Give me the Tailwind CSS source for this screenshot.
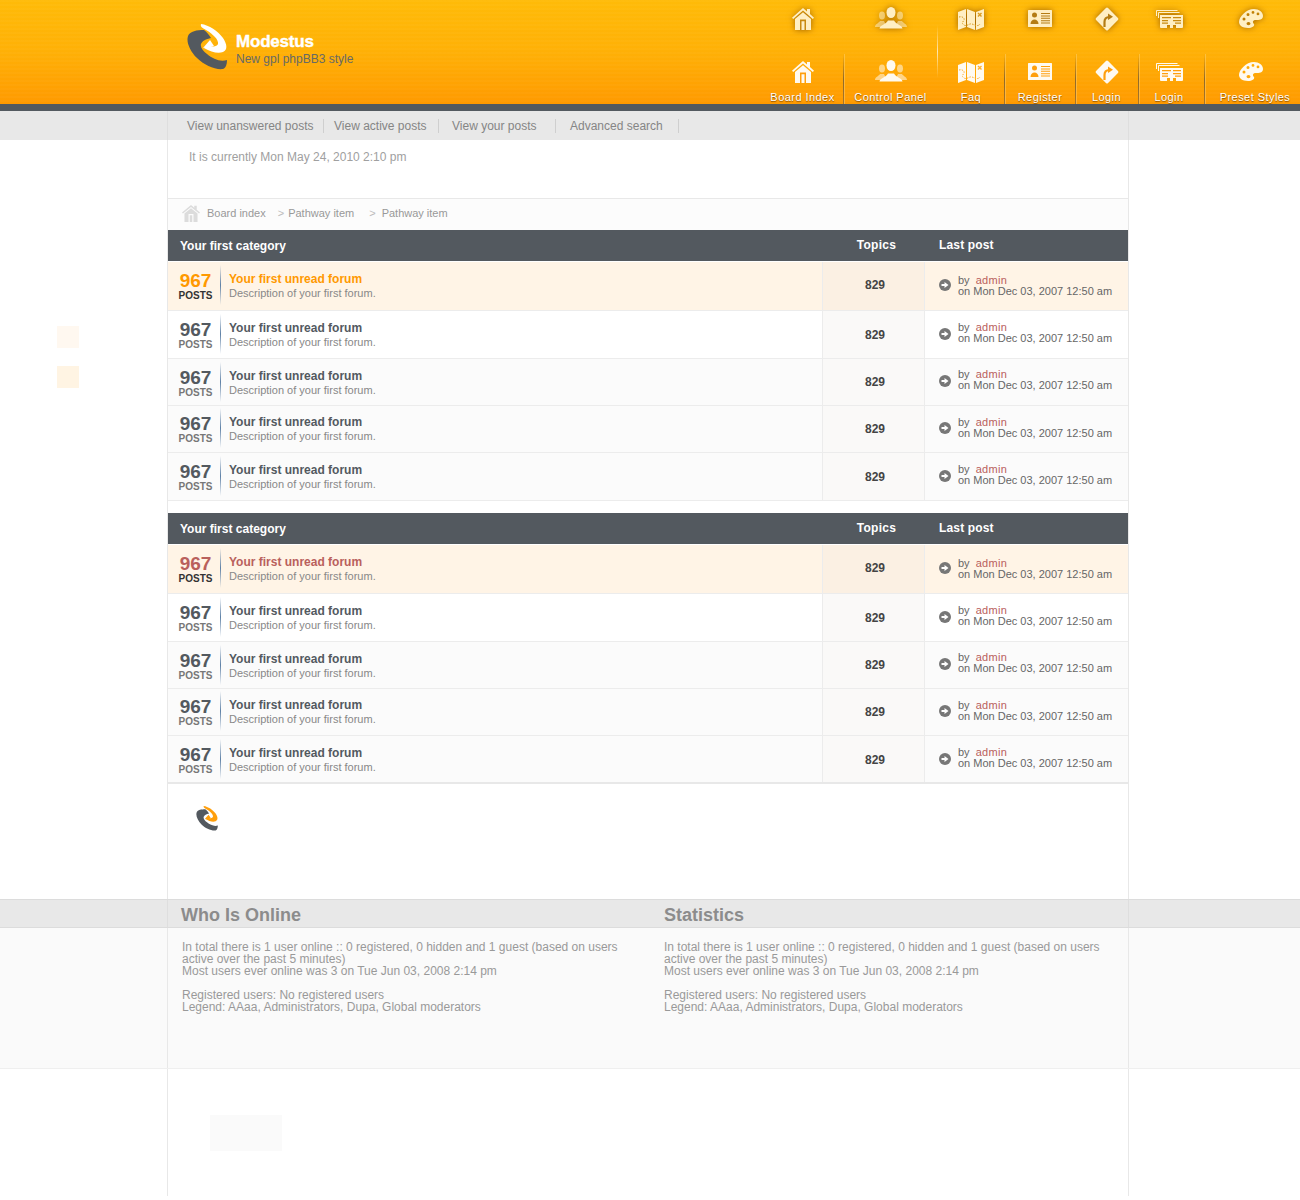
<!DOCTYPE html>
<html>
<head>
<meta charset="utf-8" />
<title>Modestus</title>
<script src="https://cdn.jsdelivr.net/npm/@tailwindcss/browser@4"></script>
</head>
<body class="bg-white font-['Liberation_Sans',Arial,sans-serif] relative">

<!-- icon sheet -->
<svg class="hidden">
  <symbol id="i-house" viewBox="0 0 22 22">
    <path fill="currentColor" d="M11 0l4 3.4V1h3v5l4 3.8-1.2 1.3L11 2.6 1.200 11.100 0 9.800z"/>
    <path fill="currentColor" d="M3 11l8-6.800 8 6.800v11H3z"/>
    <path class="fill-[var(--d)]" d="M8 11.500h6V22h-1.500v-8.800h-3V22H8z"/>
  </symbol>
  <symbol id="i-people" viewBox="0 0 32 22">
    <g fill="currentColor" opacity=".55">
      <ellipse cx="7" cy="8.500" rx="3" ry="4"/><path d="M0 20c0-3 4-4 5-6h4l3 6z"/>
      <ellipse cx="25" cy="8.500" rx="3" ry="4"/><path d="M32 20c0-3-4-4-5-6h-4l-3 6z"/>
    </g>
    <ellipse cx="16" cy="5.500" rx="4.500" ry="5.500" fill="currentColor"/>
    <path fill="currentColor" d="M4.500 21.500c.5-3.500 6.500-4 8.500-8h6c2 4 8 4.500 8.500 8z"/>
  </symbol>
  <symbol id="i-map" viewBox="0 0 26 21">
    <path fill="currentColor" d="M0 3l8-3v18l-8 3zM9 0l8 3v18l-8-3zM18 3l8-3v18l-8 3z"/>
    <path fill="none" class="stroke-[var(--d)]" stroke-width="1" stroke-dasharray="1.500 1.200" d="M1 8c3-1 6 1 5 3s-3 3 0 5 5-2 8-1 6 3 8 0"/>
    <path fill="none" class="stroke-[var(--d)]" stroke-width="1.400" d="M20 4l3.500 3.500M23.500 4L20 7.500"/>
  </symbol>
  <symbol id="i-card" viewBox="0 0 24 17">
    <rect width="24" height="17" rx=".5" fill="currentColor"/>
    <circle cx="6.500" cy="5" r="2.500" class="fill-[var(--d)]"/>
    <path class="fill-[var(--d)]" d="M2.500 14c0-3 2-4.500 4-4.500s4 1.500 4 4.500z"/>
    <path class="fill-[var(--d)]" d="M13 3h9v1h-9zM13 5.400h9v1h-9zM13 7.800h9v1h-9zM13 10.200h9v1h-9zM13 12.600h9v1h-9z"/>
  </symbol>
  <symbol id="i-sign" viewBox="0 0 26 26">
    <rect x="4.500" y="4.500" width="17" height="17" rx="1.500" transform="rotate(45 13 13)" fill="currentColor"/>
    <path fill="none" class="stroke-[var(--d)]" stroke-width="2.200" d="M10.500 21v-5c0-3 2-5 5-5"/>
    <path class="fill-[var(--d)]" d="M14 7.500l5 3.200-5 3.300z"/>
  </symbol>
  <symbol id="i-news" viewBox="0 0 27 18">
    <path fill="none" stroke="currentColor" d="M.5 6V.5h21M2.500 8V2.500h21"/>
    <path fill="currentColor" d="M4 5h23v12a1 1 0 0 1-1 1h-6v-3h-3v3h-3v-3h-3v3H5a1 1 0 0 1-1-1z"/>
    <path class="fill-[var(--d)]" d="M6 7h9v1.200H6zM17 7h8v1.200h-8zM6 10h6v1.200H6zM17 10h8v1.200h-8zM6 12.500h6v1.200H6zM19 12.500h6v1.200h-6z"/>
  </symbol>
  <symbol id="i-palette" viewBox="0 0 24 19">
    <path fill="currentColor" fill-rule="evenodd" d="M15 0C20 0 24 3 24 7C24 11 20 11 17 11C14 11 13 13 15 15C16 17 13 19 9 19C3 19 0 16 0 13C0 8 7 0 15 0ZM9 4a1.500 1.500 0 1 0 0 3 1.500 1.500 0 0 0 0-3ZM14 2a1.400 1.400 0 1 0 0 2.800A1.400 1.400 0 0 0 14 2ZM19 3.500a1.400 1.400 0 1 0 0 2.800 1.400 1.400 0 0 0 0-2.800ZM5 8.500a1.500 1.500 0 1 0 0 3 1.500 1.500 0 0 0 0-3ZM9.500 13a2 1.600 0 1 0 0 3.200 2 1.600 0 0 0 0-3.200Z"/>
  </symbol>
  <symbol id="i-swirl" viewBox="0 0 42 46">
    <path class="fill-[var(--a)]" d="M17 6C10 6 3 7 1 12C-1 18 3 27 10 34C17 41 28 46 36 45C39 44 40 40 40 36C33 38 26 35 20 30C16 27 13 23 14 20C15 17 19 15 24 14C22 11 20 8 17 6Z"/>
    <path class="fill-[var(--b)]" d="M14 0C22 1 31 7 36 14C40 20 41 26 36 28C31 30 24 28 17 24L20 21C25 23 30 23 31 20C32 16 26 10 19 6C16 4 13 3 14 0Z"/>
    <path class="fill-[var(--b)]" d="M16 24L23 16L27 22Z"/>
  </symbol>
</svg>

<div class="absolute left-[57px] top-[326px] w-[22px] h-[22px] bg-[#fff8f0]"></div>
<div class="absolute left-[57px] top-[366px] w-[22px] h-[22px] bg-[#fff4e3]"></div>

<header class="h-[104px] flex bg-[repeating-linear-gradient(180deg,rgba(255,255,255,0.025)_0_2px,transparent_2px_4px),linear-gradient(180deg,#ffbb08,#ffb006_50%,#ff9a00)]">
  <div class="ml-[187px] mt-[24px] flex items-start gap-[7px]">
    <svg class="w-[42px] h-[46px] [--a:#53595f] [--b:#ffffff]"><use href="#i-swirl"/></svg>
    <div class="mt-[8px]">
      <div class="text-[17px] leading-[20px] font-bold text-white tracking-[-0.2px] [-webkit-text-stroke:0.4px_white]">Modestus</div>
      <div class="text-[12px] leading-[14px] text-[#676a66]">New gpl phpBB3 style</div>
    </div>
  </div>
  <nav class="absolute left-[762px] top-0 h-[104px] w-[538px] flex text-white text-[11px] tracking-[0.45px] [text-shadow:0_1px_1px_rgba(110,60,0,0.8)]">
    <a class="w-[81px] flex flex-col items-center [--d:#ff9f0c]">
      <svg class="w-[22px] h-[22px] mt-[8px] text-[#ffefc4] [--d:#c88a10] drop-shadow-[0_0_3px_rgba(140,80,0,0.8)]"><use href="#i-house"/></svg>
      <svg class="w-[22px] h-[22px] mt-[31px] text-[#fffaf0]"><use href="#i-house"/></svg>
      <span class="mt-[8px] leading-[13px]">Board Index</span>
    </a>
    <i class="self-end h-[50px] w-[1px] bg-linear-to-b from-transparent via-[#8f6a2a] to-[#a8752a] shadow-[1px_0_0_rgba(255,225,160,0.35)]"></i>
    <a class="w-[93px] flex flex-col items-center [--d:#ff9f0c]">
      <svg class="w-[32px] h-[22px] mt-[7px] text-[#ffefc4] drop-shadow-[0_0_3px_rgba(140,80,0,0.8)]"><use href="#i-people"/></svg>
      <svg class="w-[32px] h-[22px] mt-[31px] text-[#fffaf0]"><use href="#i-people"/></svg>
      <span class="mt-[9px] leading-[13px]">Control Panel</span>
    </a>
    <i class="self-start mt-[25px] h-[53px] w-[1px] bg-linear-to-b from-transparent via-[#ffe6b0] to-transparent"></i>
    <a class="w-[66px] flex flex-col items-center [--d:#ffb030]">
      <svg class="w-[26px] h-[21px] mt-[9px] text-[#ffefc4] [--d:#d89a20] drop-shadow-[0_0_3px_rgba(140,80,0,0.8)]"><use href="#i-map"/></svg>
      <svg class="w-[26px] h-[21px] mt-[32px] text-[#fffaf0]"><use href="#i-map"/></svg>
      <span class="mt-[8px] leading-[13px]">Faq</span>
    </a>
    <i class="self-end h-[50px] w-[1px] bg-linear-to-b from-transparent via-[#8f6a2a] to-[#a8752a] shadow-[1px_0_0_rgba(255,225,160,0.35)]"></i>
    <a class="w-[70px] flex flex-col items-center [--d:#ff9f0c]">
      <svg class="w-[24px] h-[17px] mt-[10px] text-[#ffefc4] [--d:#b47c14] drop-shadow-[0_0_3px_rgba(140,80,0,0.8)]"><use href="#i-card"/></svg>
      <svg class="w-[24px] h-[17px] mt-[36px] text-[#fffaf0]"><use href="#i-card"/></svg>
      <span class="mt-[11px] leading-[13px]">Register</span>
    </a>
    <i class="self-end h-[50px] w-[1px] bg-linear-to-b from-transparent via-[#8f6a2a] to-[#a8752a] shadow-[1px_0_0_rgba(255,225,160,0.35)]"></i>
    <a class="w-[62px] pr-[1px] flex flex-col items-center [--d:#ff9f0c]">
      <svg class="w-[26px] h-[26px] mt-[6px] text-[#ffefc4] [--d:#b47c14] drop-shadow-[0_0_3px_rgba(140,80,0,0.8)]"><use href="#i-sign"/></svg>
      <svg class="w-[26px] h-[26px] mt-[27px] text-[#fffaf0]"><use href="#i-sign"/></svg>
      <span class="mt-[6px] leading-[13px]">Login</span>
    </a>
    <i class="self-end h-[50px] w-[1px] bg-linear-to-b from-transparent via-[#8f6a2a] to-[#a8752a] shadow-[1px_0_0_rgba(255,225,160,0.35)]"></i>
    <a class="w-[65px] pr-[5px] flex flex-col items-center [--d:#ff9f0c]">
      <svg class="w-[27px] h-[18px] mt-[10px] text-[#ffefc4] [--d:#c88a10] drop-shadow-[0_0_3px_rgba(140,80,0,0.8)]"><use href="#i-news"/></svg>
      <svg class="w-[27px] h-[18px] mt-[35px] text-[#fffaf0]"><use href="#i-news"/></svg>
      <span class="mt-[10px] leading-[13px]">Login</span>
    </a>
    <i class="self-end h-[50px] w-[1px] bg-linear-to-b from-transparent via-[#8f6a2a] to-[#a8752a] shadow-[1px_0_0_rgba(255,225,160,0.35)]"></i>
    <a class="w-[95px] flex flex-col items-center [--d:#ff9f0c]">
      <svg class="w-[24px] h-[19px] mt-[9px] mr-[4px] text-[#ffefc4] drop-shadow-[0_0_3px_rgba(140,80,0,0.8)]"><use href="#i-palette"/></svg>
      <svg class="w-[24px] h-[19px] mt-[34px] mr-[4px] text-[#fffaf0]"><use href="#i-palette"/></svg>
      <span class="mt-[10px] ml-[5px] leading-[13px]">Preset Styles</span>
    </a>
  </nav>
</header>
<div class="h-[7px] bg-[#535a60]"></div>

<div class="bg-[#e8e8e8]">
  <div class="ml-[167px] w-[962px] h-[29px] border-x border-[#dedede] flex items-center text-[12px] text-[#858585]">
    <a class="ml-[19px] w-[137px] border-r border-[#cfcfcf] leading-[14px]">View unanswered posts</a>
    <a class="pl-[10px] w-[115px] border-r border-[#cfcfcf] leading-[14px]">View active posts</a>
    <a class="pl-[13px] w-[117px] border-r border-[#cfcfcf] leading-[14px]">View your posts</a>
    <a class="pl-[14px] w-[123px] border-r border-[#cfcfcf] leading-[14px]">Advanced search</a>
  </div>
</div>

<main class="ml-[167px] w-[962px] h-[759px] border-x border-[#e8e8e8]">
  <p class="h-[58px] pl-[21px] pt-[10px] text-[12px] leading-[14px] text-[#a0a0a0]">It is currently Mon May 24, 2010 2:10 pm</p>
  <div class="h-[32px] pb-[2px] border-t border-[#e8e8e8] bg-[#fcfcfc] flex items-center text-[11px] text-[#999999]">
    <svg class="ml-[14px] w-[18px] h-[17px] text-[#dcdcdc] [--d:#fcfcfc]" viewBox="0 0 22 22" preserveAspectRatio="none"><use href="#i-house"/></svg>
    <span class="ml-[7px]">Board index</span>
    <span class="ml-[12px] text-[#bbbbbb]">&gt;</span>
    <span class="ml-[4px]">Pathway item</span>
    <span class="ml-[15px] text-[#bbbbbb]">&gt;</span>
    <span class="ml-[6px]">Pathway item</span>
  </div>
  <section id="cat1"></section>
  <div class="h-[12px]"></div>
  <section id="cat2"></section>
  <div class="-mt-[2px] h-[2px] relative bg-[#e8e8e8]"></div>
  <svg class="ml-[28px] mt-[22px] w-[23px] h-[25px] [--a:#53595f] [--b:#ff9f0c]"><use href="#i-swirl"/></svg>
</main>

<div class="bg-[#e8e8e8] border-y border-[#dcdcdc]">
  <div class="ml-[167px] w-[962px] h-[27px] border-x border-[#dedede] flex text-[18px] font-bold text-[#8c8c8c] leading-[27px]">
    <h2 class="ml-[13px] w-[483px] mt-[2px]">Who Is Online</h2>
    <h2 class="mt-[2px]">Statistics</h2>
  </div>
</div>
<div class="bg-[#fafafa] border-b border-[#efefef]">
  <div class="ml-[167px] w-[962px] h-[140px] border-x border-[#e8e8e8] flex pt-[13px] text-[12px] leading-[12px] text-[#999999]">
    <p class="ml-[14px] w-[482px]">In total there is 1 user online :: 0 registered, 0 hidden and 1 guest (based on users<br>active over the past 5 minutes)<br>Most users ever online was 3 on Tue Jun 03, 2008 2:14 pm<br><br>Registered users: No registered users<br>Legend: AAaa, Administrators, Dupa, Global moderators</p>
    <p class="w-[450px]">In total there is 1 user online :: 0 registered, 0 hidden and 1 guest (based on users<br>active over the past 5 minutes)<br>Most users ever online was 3 on Tue Jun 03, 2008 2:14 pm<br><br>Registered users: No registered users<br>Legend: AAaa, Administrators, Dupa, Global moderators</p>
  </div>
</div>
<div class="ml-[167px] w-[962px] h-[127px] border-x border-[#e8e8e8] pt-[46px]">
  <div class="ml-[42px] w-[72px] h-[36px] bg-[#fafafa]"></div>
</div>

<script>
// row heights are not even in the design, so they come from data
const heights = [49, 48, 47, 47, 48]
const rowBg = ['bg-[#fff4e6]', 'bg-white', 'bg-[#fbfbfb]', 'bg-[#fbfbfb]', 'bg-[#fbfbfb]']
const titlePad = [10, 10, 10, 9, 10]
const lastPostLift = [1, 4, 4, 2, 4]

function category(unreadColor) {
  let html = `<div class="h-[32px] pb-px bg-[#53595f] border-b border-white flex text-white font-bold text-[12px]">
    <div class="w-[654px] pl-[12px] leading-[33px]">Your first category</div>
    <div class="w-[103px] pl-[6px] text-center leading-[30px] tracking-[0.3px]">Topics</div>
    <div class="pl-[14px] leading-[30px] tracking-[0.15px]">Last post</div>
  </div>`
  heights.forEach((h, i) => {
    const hl = i === 0
    html += `<div class="flex border-b border-[#ececec] ${rowBg[i]}" style="height:${h}px">
      <div class="w-[654px] flex" style="padding-top:${titlePad[i] - 7}px">
        <div class="w-[52px] pl-[3px] text-center">
          <div class="text-[19px] leading-[20px] mt-[6px] font-bold ${hl ? unreadColor : 'text-[#53595f]'}">967</div>
          <div class="text-[10px] leading-[10px] mt-[0px] font-bold ${hl ? 'text-[#333333]' : 'text-[#777777]'}">POSTS</div>
        </div>
        <i class="w-[1px] h-[40px] bg-linear-to-b from-transparent via-[#5d80a6] to-transparent"></i>
        <div class="ml-[8px] mt-[7px]">
          <div class="text-[12px] leading-[14px] font-bold ${hl ? unreadColor : 'text-[#53595f]'}">Your first unread forum</div>
          <div class="text-[11px] leading-[14px] text-[#888888]">Description of your first forum.</div>
        </div>
      </div>
      <div class="w-[103px] pl-[3px] border-x border-[#ececec] flex items-center justify-center text-[12px] font-bold text-[#444444] ${hl ? 'pb-[2px] bg-[#fbf0e3]' : 'bg-[#faf9f8]'}">829</div>
      <div class="flex-1 flex items-center pl-[14px]">
        <svg class="w-[12px] h-[12px] mb-[2px]" viewBox="0 0 12 12"><circle cx="6" cy="6" r="6" fill="#777777"/><path fill="#ffffff" d="M2.500 5h3V3l4 3-4 3V7h-3z"/></svg>
        <div class="ml-[7px] text-[11px] leading-[11px] text-[#666666]" style="margin-top:-${lastPostLift[i]}px">by <span class="ml-[3px] font-medium tracking-[0.3px] text-[#b9605c]">admin</span><br>on Mon Dec 03, 2007 12:50 am</div>
      </div>
    </div>`
  })
  return html
}
document.getElementById('cat1').innerHTML = category('text-[#ff9900]')
document.getElementById('cat2').innerHTML = category('text-[#b9605c]')
</script>
</body>
</html>
